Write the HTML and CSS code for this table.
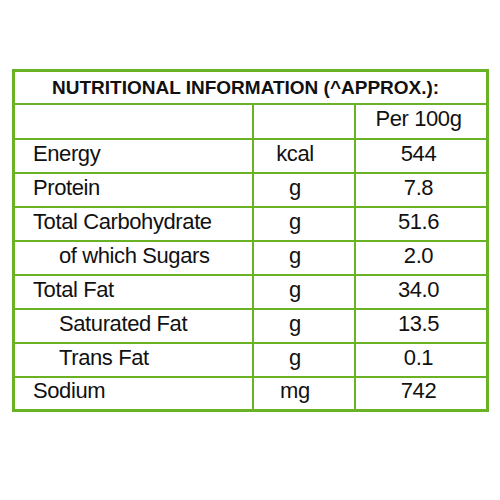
FILE: index.html
```
<!DOCTYPE html>
<html>
    <head>

        <title>Nutritional Information</title>

        <link rel="stylesheet" href="styles.css">

    </head>
    <body>

        <div class="facts">

            <div class="cell title">NUTRITIONAL INFORMATION (^APPROX.):</div>

            <div class="cell"></div>
            <div class="cell unit"></div>
            <div class="cell value">Per 100g</div>

            <div class="cell name">Energy</div>
            <div class="cell unit">kcal</div>
            <div class="cell value">544</div>

            <div class="cell name">Protein</div>
            <div class="cell unit">g</div>
            <div class="cell value">7.8</div>

            <div class="cell name">Total Carbohydrate</div>
            <div class="cell unit">g</div>
            <div class="cell value">51.6</div>

            <div class="cell name sub">of which Sugars</div>
            <div class="cell unit">g</div>
            <div class="cell value">2.0</div>

            <div class="cell name">Total Fat</div>
            <div class="cell unit">g</div>
            <div class="cell value">34.0</div>

            <div class="cell name sub">Saturated Fat</div>
            <div class="cell unit">g</div>
            <div class="cell value">13.5</div>

            <div class="cell name sub">Trans Fat</div>
            <div class="cell unit">g</div>
            <div class="cell value">0.1</div>

            <div class="cell name">Sodium</div>
            <div class="cell unit">mg</div>
            <div class="cell value">742</div>

        </div>

    </body>
</html>
```

FILE: styles.css
```
/** Page **/
body {
    margin: 0;
    background-color: #fff;
    font-family: "Liberation Sans", Arial, sans-serif;
    color: #111;
}

/** Table **/
.facts {
    display: grid;
    grid-template-columns: 237px 100px 130px;
    grid-template-rows: 31px 33px repeat(7, 32px) 31px;
    gap: 2px;
    width: 471px;
    margin: 69px 0 0 12px;
    border: 3px solid #68b224;
    background-color: #68b224;
}

/** Cells **/
.cell {
    display: flex;
    align-items: center;
    padding-bottom: 5px;
    box-sizing: border-box;
    background-color: #fff;
    font-size: 22px;
    letter-spacing: -0.4px;
}
.title {
    grid-column: 1 / 4;
    padding: 0 0 0 37px;
    font-size: 19px;
    font-weight: bold;
    letter-spacing: 0;
}
.name {
    padding-left: 18px;
}
.name.sub {
    padding-left: 44px;
}
.unit {
    justify-content: center;
    padding-right: 18px;
}
.value {
    justify-content: center;
    padding-right: 5px;
}
```
